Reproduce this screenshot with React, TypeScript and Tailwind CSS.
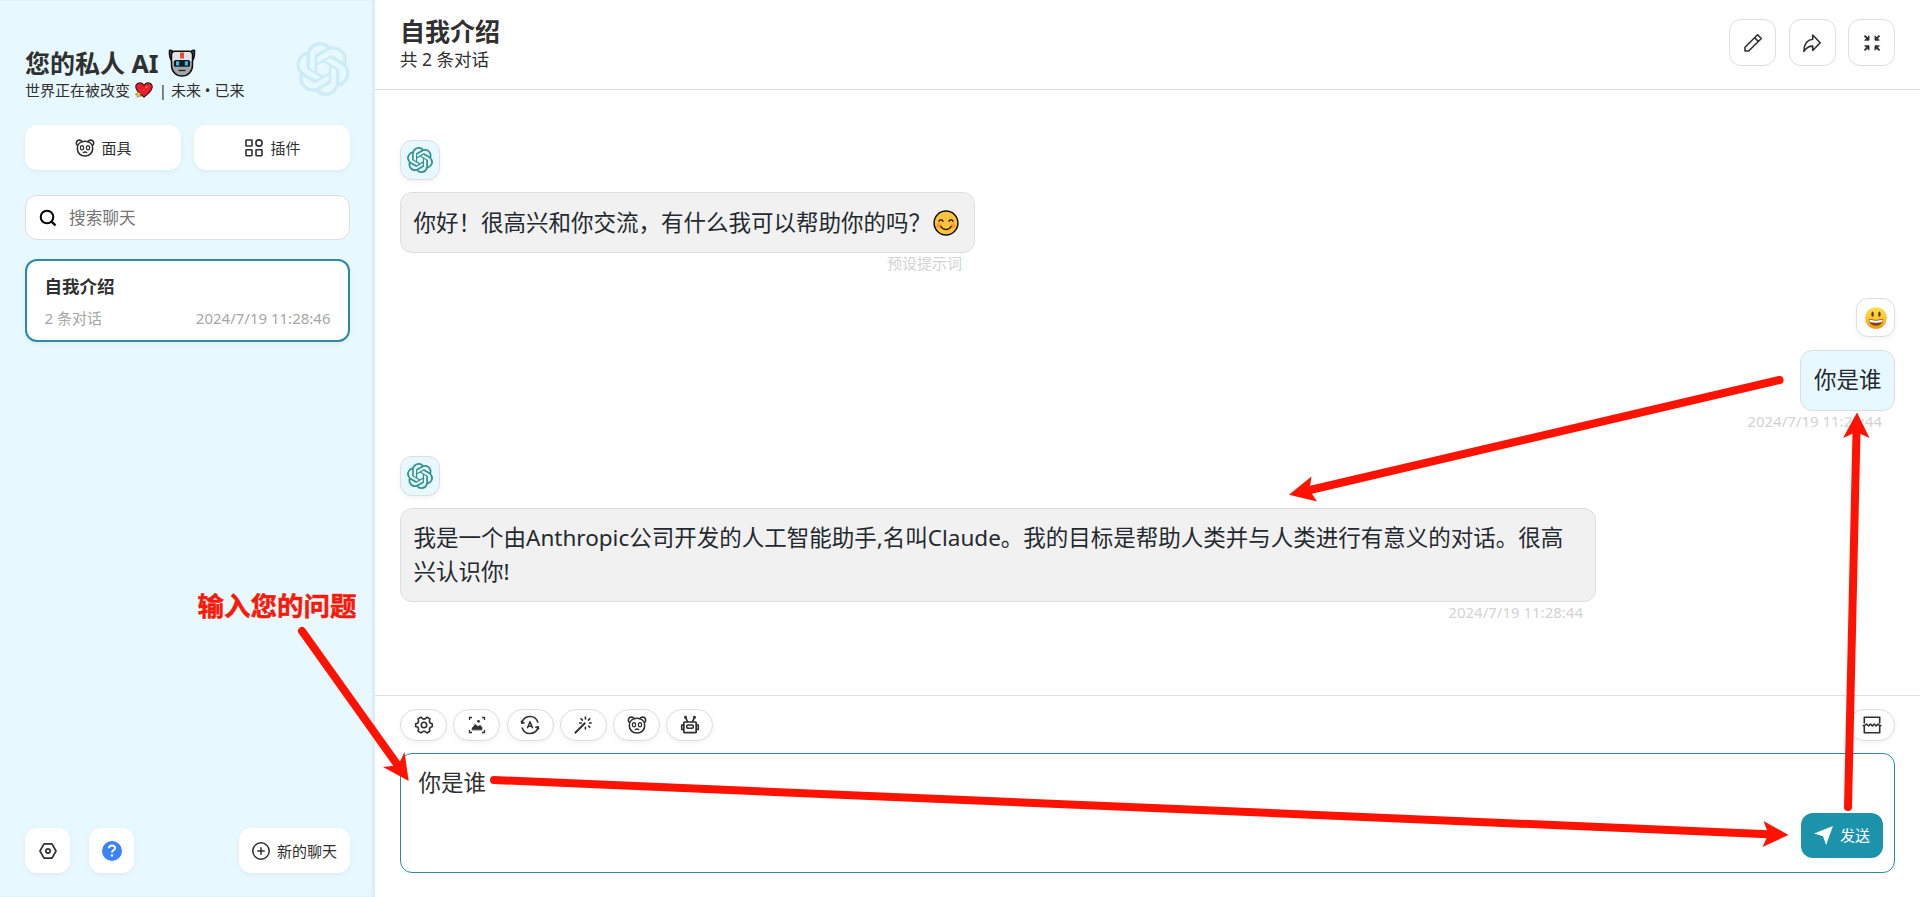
import type { ReactNode } from "react";
import { SiOpenai } from "react-icons/si";

type IconProps = { children: ReactNode; className?: string };

function Icon({ children, className = "size-[18px]" }: IconProps) {
  return (
    <svg
      viewBox="0 0 18 18"
      className={`${className} shrink-0 overflow-visible`}
      fill="none"
      stroke="currentColor"
      strokeWidth="1.6"
      strokeLinejoin="round"
      strokeLinecap="round"
    >
      {children}
    </svg>
  );
}

const MaskIcon = () => (
  <Icon>
    <path d="M1.200 6.300C-.6 4 .6 1.100 3.200 1.100c1.400 0 2.400.5 3 1.500M16.800 6.300C18.600 4 17.400 1.100 14.800 1.100c-1.400 0-2.400.5-3 1.500" />
    <path d="M9 2.200c4.600 0 7.700 3 7.700 7.300S13.600 17 9 17s-7.700-3.200-7.700-7.500S4.400 2.200 9 2.200Z" />
    <ellipse cx="6" cy="8.800" rx="1.600" ry="2.100" strokeWidth="1.200" />
    <ellipse cx="12" cy="8.800" rx="1.600" ry="2.100" strokeWidth="1.200" />
    <path d="M7.300 13.600 9 12.800l1.700.8" strokeWidth="1.400" />
  </Icon>
);

const PluginIcon = () => (
  <Icon>
    <rect x="1" y="1" width="6" height="6" rx=".6" />
    <circle cx="14" cy="4" r="3.100" />
    <rect x="1" y="10.700" width="6" height="6" rx=".6" />
    <rect x="11" y="10.700" width="6" height="6" rx=".6" />
  </Icon>
);

const SearchIcon = () => (
  <Icon>
    <circle cx="8" cy="8" r="6.300" strokeWidth="2" />
    <path d="m12.800 12.800 3.700 3.700" strokeWidth="2.400" strokeLinecap="butt" />
  </Icon>
);

const HexIcon = () => (
  <Icon>
    <path d="M1 9 5 1.800h8L17 9l-4 7.200H5Z" strokeWidth="1.700" />
    <circle cx="9" cy="9" r="2.100" strokeWidth="1.700" />
  </Icon>
);

const HelpIcon = () => (
  <Icon className="size-5">
    <circle cx="9" cy="9" r="9" fill="#3b82f6" stroke="none" />
    <path d="M6.200 6.600C6.300 3.300 11.700 3.200 11.800 6.300c0 2-2.800 2.100-2.800 4" stroke="#fff" strokeWidth="1.800" strokeLinecap="butt" />
    <circle cx="9" cy="13" r="1.100" fill="#fff" stroke="none" />
  </Icon>
);

const AddIcon = () => (
  <Icon>
    <circle cx="9" cy="9" r="8.200" strokeWidth="1.500" />
    <path d="M9 5.800v6.400M5.800 9h6.400" strokeWidth="1.500" />
  </Icon>
);

const EditIcon = () => (
  <Icon>
    <path d="M1 17v-3.700L13.600.8l3.700 3.700L4.700 17ZM10.700 3.800l3.600 3.600" strokeWidth="1.600" />
  </Icon>
);

const ShareIcon = () => (
  <Icon>
    <path d="M9.700 1 17.200 8.700l-7.500 7.800v-4.400C5.900 12 3.500 13.200.9 17.300.9 10.300 4 6 9.700 5.300Z" strokeWidth="1.600" />
  </Icon>
);

const ShrinkIcon = () => (
  <Icon>
    <path
      d="m1.500 1.700 4 4M16.500 1.700l-4 4M1.500 16.300l4-4M16.500 16.300l-4-4"
      strokeWidth="1.900"
      strokeLinecap="butt"
    />
    <path
      d="M6 2.200v4H2ZM12 2.200v4h4ZM6 15.800v-4H2ZM12 15.800v-4h4Z"
      fill="currentColor"
      strokeWidth=".9"
    />
  </Icon>
);

const GearIcon = () => (
  <Icon>
    <path d="M6 1.200 7.300 2.400c1 .8 2.400.8 3.400 0L12 1.200l2.900 1.700-.4 1.700c-.2 1.300.5 2.500 1.700 2.900l1.100.4v2.600l-1.100.4c-1.200.4-1.900 1.600-1.700 2.900l.4 1.500-2.900 1.700-1.300-1.100c-1-.8-2.400-.8-3.400 0L6 16.900l-2.900-1.700.4-1.500c.2-1.300-.5-2.500-1.700-2.900L.7 10.400V7.800l1.100-.3C3 7 3.700 5.800 3.500 4.600l-.4-1.700Z" />
    <circle cx="9" cy="9" r="2.700" />
  </Icon>
);

const ImageIcon = () => (
  <Icon>
    <g strokeWidth="1.300" strokeLinecap="butt" strokeLinejoin="miter">
      <path d="M1.500 4V1.500H4M14 1.500h2.500V4M1.500 14v2.500H4M14 16.500h2.500V14" />
    </g>
    <path d="M4 13.700c0-3 1.500-2.500 2-4 .7-1.500 2-1.500 2.700 0 1 1.200 2 .3 3-.2 1.300-.2 1.500 1.200 2.300 2.200v2Z" fill="currentColor" strokeWidth=".6" />
    <circle cx="10.500" cy="5.300" r="1.400" fill="currentColor" stroke="none" />
  </Icon>
);

const AutoIcon = () => (
  <Icon>
    <path d="M.9 7A8.300 8.300 0 0 1 16.800 6M17.100 11A8.300 8.300 0 0 1 1.200 12" strokeWidth="1.600" />
    <path d="M.3 5.200.9 7.300l2.300-.6M17.700 12.800l-.6-2.100-2.300.6" strokeWidth="1.400" />
    <path d="m6.300 12.300 2.700-6.500 2.700 6.500M7.200 10.300h3.600" strokeWidth="1.500" strokeLinecap="butt" />
  </Icon>
);

const WandIcon = () => (
  <Icon>
    <path d="m1.300 16.700 9.500-9.400" strokeWidth="1.900" />
    <path d="M11.400 1v2M7 2.700l1.400 1.400M15.800 2.700l-1.400 1.400M5.700 7h1.600M15.500 7h1.700M14.500 10l1.300 1.300M11.400 11.300V13" strokeWidth="1.600" />
  </Icon>
);

const RobotIcon = () => (
  <Icon>
    <rect x="2.800" y="6" width="12.400" height="10.700" rx=".8" strokeWidth="1.700" />
    <path d="M2.600 9H.7v4.500h1.900M15.400 9h1.900v4.500h-1.900M6.500 5.700 4.500 1.300M11.500 5.700l2-4.400" />
    <circle cx="4.500" cy="1.300" r=".7" fill="currentColor" />
    <circle cx="13.500" cy="1.300" r=".7" fill="currentColor" />
    <rect x="5.700" y="9" width="6.600" height="3.200" rx="1.200" />
  </Icon>
);

const BreakIcon = () => (
  <Icon>
    <path d="M1.300 7V1.300h15.400V7M1.300 11v5.700h15.400V11M.2 9.600h1.400L3.600 8l2 2 1.900-2L9.300 10l1.900-2 2 2L15 8l1.500 1.600h1.400" strokeWidth="1.600" />
  </Icon>
);

const PlaneIcon = () => (
  <Icon className="size-[19px]">
    <path d="M0 7 18 0l-6.500 18-3-8.200Z" fill="currentColor" stroke="none" />
  </Icon>
);

function RobotFace() {
  return (
    <svg viewBox="0 0 28 28" className="h-7 w-7 shrink-0">
      <path d="M1.500 1.500c2-.7 3.300.3 3.300 2L6 9l-2.200 3C1.800 9.500 1.300 5 1.500 1.500ZM26.500 1.500c-2-.7-3.300.3-3.300 2L22 9l2.200 3c2-2.500 2.500-7 2.300-10.500Z" fill="#555b60" stroke="#111" strokeWidth="1.500" />
      <path d="M7 2.200h14c2 0 3.500 1.300 3.500 3.300v10.800c0 6-4.500 10.700-10.500 10.700S3.500 22.300 3.500 16.300V5.500c0-2 1.500-3.300 3.500-3.300Z" fill="#a4a7a9" stroke="#111" strokeWidth="1.500" />
      <path d="M7 3h14c1.500 0 2.500 1.500 2.500 3v6h-19V6c0-1.500 1-3 2.500-3Z" fill="#e2e4e5" />
      <path d="M12 3.500h4v6h-4Z" fill="#ef4a2f" />
      <rect x="6" y="11" width="16" height="6.800" rx="1.500" fill="#161b20" />
      <path d="M8 12.300h3.200v4.200H8ZM16.800 12.300H20v4.200h-3.200Z" fill="#38b8e8" />
      <path d="M10.500 21.500h7" stroke="#222" strokeWidth="1.300" />
    </svg>
  );
}

function Heart() {
  return (
    <svg viewBox="0 0 18 16" className="h-4 w-[18px] shrink-0 overflow-visible">
      <path d="M9 15C5 12 .8 8.700.8 5c0-4.600 6-5.500 8.200-1.600C11.200-.5 17.200.4 17.200 5c0 3.700-4.200 7-8.200 10Z" fill="#ee1c2e" stroke="#2a1010" strokeWidth="1.100" />
      <path d="m3.300 9.200 1 1.800 2.100-.1-1.300 1.600 1 2.100-2.200-.7-1.600 1.600-.1-2.300-2-1 2.200-.7Z" fill="#ffc928" stroke="#4a2c00" strokeWidth=".4" />
      <path d="m11.500 3.200.5 1.300 1.300.5-1.300.5-.5 1.300-.5-1.300L9.700 5l1.300-.5ZM8.500 7.300l.2.800.8.200-.8.200-.2.800-.2-.8-.8-.2.800-.2Z" fill="#ff8a3c" />
    </svg>
  );
}

function BlushFace() {
  return (
    <svg viewBox="0 0 26 26" className="ml-[2px] size-[26px] shrink-0">
      <circle cx="13" cy="13" r="11.900" fill="#fcc43c" stroke="#111" strokeWidth="1.500" />
      <circle cx="6.200" cy="15.600" r="2.600" fill="#f79a3e" />
      <circle cx="19.800" cy="15.600" r="2.600" fill="#f79a3e" />
      <path d="M6 11.300c.8-2.200 3.200-2.200 4 0M16 11.300c.8-2.200 3.200-2.200 4 0M8 16.500c2 4 8 4 10 0" fill="none" stroke="#3a2405" strokeWidth="1.500" strokeLinecap="round" />
    </svg>
  );
}

function GrinFace() {
  return (
    <svg viewBox="0 0 22 22" className="size-[22px]">
      <defs>
        <linearGradient id="grin" x1="0" y1="0" x2="0" y2="1">
          <stop offset="0" stopColor="#fde04a" />
          <stop offset=".6" stopColor="#fbc02e" />
          <stop offset="1" stopColor="#ef8f1c" />
        </linearGradient>
      </defs>
      <circle cx="11" cy="11" r="10.800" fill="url(#grin)" />
      <ellipse cx="7.600" cy="7.200" rx="1.200" ry="2.600" fill="#5a3510" />
      <ellipse cx="14.400" cy="7.200" rx="1.200" ry="2.600" fill="#5a3510" />
      <path d="M3.800 11.800c4.500 1.500 9.900 1.500 14.400 0 .1 4.300-3 7-7.200 7s-7.300-2.700-7.200-7Z" fill="#7b4a16" />
      <path d="M4.200 12.600c4.500 1.400 9.100 1.400 13.600 0-.1 1-.3 1.700-.7 2.400-4 1-8.200 1-12.200 0-.4-.7-.6-1.400-.7-2.400Z" fill="#fff" />
    </svg>
  );
}

const soft = "shadow-[0_2px_5px_rgba(0,0,0,0.05)]";

function SideButton({ icon, label, className }: { icon: ReactNode; label?: string; className: string }) {
  return (
    <button className={`flex h-[45px] items-center justify-center gap-[7px] rounded-[12px] bg-white text-[15px] ${soft} ${className}`}>
      {icon}
      {label && <span className="leading-5">{label}</span>}
    </button>
  );
}

function Sidebar() {
  return (
    <aside className="flex w-[375px] shrink-0 flex-col bg-[#e7f8ff] px-[25px] pb-6 shadow-[inset_-3px_0_3px_rgba(0,0,0,0.05)]">
      <header className="flex h-[125px] justify-between pt-[42px]">
        <div className="pt-[5px]">
          <h1 className="flex h-8 items-center text-[25px] leading-8 font-bold whitespace-nowrap">
            您的私人 AI<span className="ml-[9px]"><RobotFace /></span>
          </h1>
          <p className="flex h-[22px] items-center text-[15px] leading-[22px] whitespace-pre">
            世界正在被改变 <span className="mx-[1.5px]"><Heart /></span>{" | 未来 • 已来"}
          </p>
        </div>
        <SiOpenai className="size-[54px] text-[#ceecf6]" />
      </header>
      <div className="flex gap-[13px]">
        <SideButton className="flex-1 pl-[2px]" icon={<MaskIcon />} label="面具" />
        <SideButton className="flex-1 pl-[2px]" icon={<PluginIcon />} label="插件" />
      </div>
      <div className="mt-[25px] flex h-[45px] items-center gap-3 rounded-[12px] border border-[#dedede] bg-white pl-[13px]">
        <span className="text-black"><SearchIcon /></span>
        <span className="text-[16.67px] leading-6 text-[#757575]">搜索聊天</span>
      </div>
      <div className={`mt-[19px] flex h-[83px] flex-col justify-between rounded-[12px] border-2 border-[#2c8ba0] bg-white px-[17.5px] pt-[11px] pb-[11px] ${soft}`}>
        <h2 className="text-[17.5px] leading-7 font-bold">自我介绍</h2>
        <div className="flex justify-between text-[15px] leading-[22px] text-[#a6a6a6]">
          <span>2 条对话</span>
          <time>2024/7/19 11:28:46</time>
        </div>
      </div>
      <footer className="mt-auto flex">
        <SideButton className="w-[45px]" icon={<HexIcon />} />
        <SideButton className="ml-[19px] w-[45px]" icon={<HelpIcon />} />
        <SideButton className="ml-auto w-[111px]" icon={<AddIcon />} label="新的聊天" />
      </footer>
    </aside>
  );
}

function HeaderButton({ children }: { children: ReactNode }) {
  return <button className="flex size-[47px] items-center justify-center rounded-[12px] border border-[#dedede]">{children}</button>;
}

function BotAvatar() {
  return (
    <div className={`flex size-10 items-center justify-center rounded-[12px] border border-[#dedede] bg-[#e7f8ff] text-[#2f9390] ${soft}`}>
      <SiOpenai className="size-[26px]" />
    </div>
  );
}

const bubble = "rounded-[12px] border border-[#dedede] px-[12.5px] text-[22.5px] leading-[33.75px] text-[#24292f] whitespace-nowrap";
const stamp = "pr-[13px] text-right text-[15px] leading-5 text-[#d3d3d3]";

function Messages() {
  return (
    <section className="flex flex-1 flex-col px-[25px] pt-[50px]">
      <article className="h-[158px] w-[575px]">
        <BotAvatar />
        <div className={`mt-3 flex h-[61px] items-center bg-[#f1f1f1] ${bubble}`}>
          你好！很高兴和你交流，有什么我可以帮助你的吗？
          <BlushFace />
        </div>
        <p className={stamp}>预设提示词</p>
      </article>
      <article className="flex h-[158px] flex-col items-end">
        <div className={`flex size-[39px] items-center justify-center rounded-[12px] border border-[#dedede] bg-white ${soft}`}>
          <GrinFace />
        </div>
        <div className={`mt-[13px] flex h-[61px] items-center bg-[#e7f8ff] pb-px ${bubble}`}>你是谁</div>
        <p className={stamp}>2024/7/19 11:28:44</p>
      </article>
      <article className="w-[1196px]">
        <BotAvatar />
        <div className={`mt-3 h-[94px] bg-[#f1f1f1] pt-[12px] ${bubble}`}>
          我是一个由Anthropic公司开发的人工智能助手,名叫Claude。我的目标是帮助人类并与人类进行有意义的对话。很高
          <br />
          兴认识你!
        </div>
        <p className={stamp}>2024/7/19 11:28:44</p>
      </article>
    </section>
  );
}

function Action({ children, className = "" }: { children: ReactNode; className?: string }) {
  return (
    <button className={`flex h-8 w-[47px] items-center justify-center rounded-full border border-[#dedede] bg-white ${soft} ${className}`}>
      {children}
    </button>
  );
}

function Composer() {
  return (
    <section className="flex h-[202px] flex-col border-t border-[#dedede] px-[25px] pt-[13px] pb-6">
      <div className="flex gap-[6.3px]">
        <Action><GearIcon /></Action>
        <Action><ImageIcon /></Action>
        <Action><AutoIcon /></Action>
        <Action><WandIcon /></Action>
        <Action><MaskIcon /></Action>
        <Action><RobotIcon /></Action>
        <Action className="ml-auto"><BreakIcon /></Action>
      </div>
      <div className="mt-3 flex flex-1 items-end justify-between rounded-[12px] border border-[#2c8ba0] bg-white pr-[11px] pb-[14px] pl-[17.5px]">
        <span className="self-start pt-[12px] text-[22.5px] leading-[34px]">你是谁</span>
        <button className="flex h-[45px] w-[82px] items-center justify-center gap-[7px] rounded-[12px] bg-[#1d93ab] text-[15px] text-white">
          <PlaneIcon />
          发送
        </button>
      </div>
    </section>
  );
}

function Annotations() {
  return (
    <div className="pointer-events-none absolute inset-0">
      <svg viewBox="0 0 1920 897" className="absolute inset-0 h-full w-full" fill="#ff1200" stroke="none">
        <g stroke="#ff1200" strokeWidth="8" strokeLinecap="round">
          <path d="M302 631 399 767" />
          <path d="M494 780 1768 834.200" />
          <path d="M1848 807 1856.500 432" />
          <path d="M1779.500 380 1310 490" />
        </g>
        <path d="M408.700 781 383 767 396 765.500 400 761.500 404.500 752Z" />
        <path d="M1788.500 835 1763.500 821 1768.500 834 1762.500 847Z" />
        <path d="M1857 412.500 1843 438 1856.500 432 1869.500 438Z" />
        <path d="M1289 494.700 1311.500 476.500 1309.500 490 1317 501.500Z" />
      </svg>
      <span className="absolute top-[586px] left-[197.5px] text-[26.5px] leading-10 font-bold whitespace-nowrap text-[#f51a0c] [-webkit-text-stroke:0.5px_#f51a0c] [text-shadow:0_0_2px_#fff,0_0_2px_#fff,0_0_3px_#fff]">
        输入您的问题
      </span>
    </div>
  );
}

export default function App() {
  return (
    <div className="relative flex h-[897px] w-[1920px] overflow-hidden bg-white font-['Noto_Sans','Noto_Sans_CJK_SC',sans-serif] text-[#303030]">
      <Sidebar />
      <main className="flex min-w-0 flex-1 flex-col">
        <header className="flex h-[90px] items-start justify-between border-b border-[#dedede] px-[25px] pt-[16px]">
          <div>
            <h1 className="text-[25px] leading-[31px] font-bold">自我介绍</h1>
            <p className="text-[17.5px] leading-6">共 2 条对话</p>
          </div>
          <div className="flex gap-[12.5px] pt-[3px]">
            <HeaderButton><EditIcon /></HeaderButton>
            <HeaderButton><ShareIcon /></HeaderButton>
            <HeaderButton><ShrinkIcon /></HeaderButton>
          </div>
        </header>
        <Messages />
        <Composer />
      </main>
      <Annotations />
    </div>
  );
}
